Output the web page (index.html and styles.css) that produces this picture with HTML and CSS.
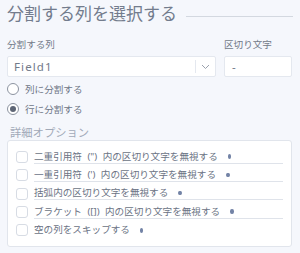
FILE: index.html
```html
<!DOCTYPE html>
<html lang="ja">
<head>
  <meta charset="UTF-8">
  <meta name="viewport" content="width=device-width, initial-scale=1.0">
  <title>分割する列を選択する</title>
  <link rel="stylesheet" href="styles.css">
</head>
<body>
  <div class="title-row">
    <h1>分割する列を選択する</h1>
    <div class="rule"></div>
  </div>

  <div class="fields">
    <div class="field field-main">
      <label class="field-label">分割する列</label>
      <div class="select">
        <span class="select-value">Field1</span>
        <span class="select-arrow">
          <svg width="9" height="6" viewBox="0 0 9 6"><path d="M1 1l3.5 3.5L8 1" fill="none" stroke="#9aa1ad" stroke-width="1"/></svg>
        </span>
      </div>
    </div>
    <div class="field field-sep">
      <label class="field-label">区切り文字</label>
      <div class="input">-</div>
    </div>
  </div>

  <div class="radios">
    <div class="radio-row"><span class="radio"></span>列に分割する</div>
    <div class="radio-row"><span class="radio checked"></span>行に分割する</div>
  </div>

  <div class="section-title">詳細オプション</div>
  <div class="options">
    <div class="option"><span class="checkbox"></span><span class="option-label">二重引用符 (&quot;) 内の区切り文字を無視する<i class="dot"></i></span></div>
    <div class="option"><span class="checkbox"></span><span class="option-label">一重引用符 (') 内の区切り文字を無視する<i class="dot"></i></span></div>
    <div class="option"><span class="checkbox"></span><span class="option-label">括弧内の区切り文字を無視する<i class="dot"></i></span></div>
    <div class="option"><span class="checkbox"></span><span class="option-label">ブラケット ([]) 内の区切り文字を無視する<i class="dot"></i></span></div>
    <div class="option"><span class="checkbox"></span><span class="option-label">空の列をスキップする<i class="dot"></i></span></div>
  </div>
</body>
</html>
```

FILE: styles.css
```css
body {
  margin: 0;
  padding: 2px 8px 0 7px;
  background: #f5f7fc;
  font-family: "Noto Sans", "Noto Sans CJK JP", sans-serif;
  color: #6e7686;
}

/* heading with a rule to the right */
.title-row {
  display: flex;
  align-items: center;
  gap: 9px;
  height: 24px;
}
.title-row h1 {
  margin: 0;
  font-size: 17px;
  font-weight: 400;
  line-height: 24px;
  color: #737c8d;
  white-space: nowrap;
}
.rule {
  flex: 1;
  border-top: 1px solid #d3d8e0;
  margin-top: 5px;
  margin-right: -1px;
}

.fields {
  display: flex;
  gap: 8px;
  margin-top: 12px;
}
.field-main {
  width: 209px;
}
.field-sep {
  flex: 1;
}
.field-label {
  display: block;
  font-size: 9.6px;
  line-height: 14px;
  margin-bottom: 4px;
  color: #727a89;
}
.select,
.input {
  box-sizing: border-box;
  height: 21px;
  background: #fff;
  border: 1px solid #e4e8ef;
  border-radius: 2px;
  font-size: 11.5px;
  letter-spacing: 1.1px;
  color: #727a8a;
}
.select {
  display: flex;
  align-items: center;
}
.select-value {
  flex: 1;
  padding-left: 6px;
}
.select-arrow {
  width: 19px;
  height: 13px;
  border-left: 1px solid #e4e8ef;
  display: flex;
  align-items: center;
  justify-content: center;
}
.input {
  display: flex;
  align-items: center;
  padding-left: 7px;
}

.radios {
  margin-top: 2px;
}
.radio-row {
  display: flex;
  align-items: center;
  gap: 6px;
  height: 20px;
  font-size: 9.6px;
  color: #6e7686;
}
.radio {
  box-sizing: border-box;
  width: 12px;
  height: 12px;
  border: 1px solid #8c93a0;
  border-radius: 50%;
  background: #fff;
  position: relative;
}
.radio.checked::after {
  content: "";
  position: absolute;
  left: 2px;
  top: 2px;
  width: 6px;
  height: 6px;
  border-radius: 50%;
  background: #5d6575;
}

.section-title {
  margin-top: 7px;
  padding-left: 3px;
  font-size: 11.3px;
  line-height: 14px;
  color: #a1a9b8;
}

.options {
  background: #fff;
  border: 1px solid #e1e5ec;
  border-radius: 3px;
  padding: 7px 8px 7px 8px;
}
.option {
  display: flex;
  align-items: center;
  gap: 6px;
  height: 18.3px;
}
.checkbox {
  box-sizing: border-box;
  width: 12px;
  height: 12px;
  border: 1px solid #d7dce4;
  border-radius: 3px;
  flex-shrink: 0;
}
.option-label {
  flex: 1;
  display: flex;
  align-items: center;
  font-size: 9.6px;
  line-height: 12px;
  word-spacing: 3px;
  color: #6b7384;
  border-bottom: 1px solid #dfe3ea;
}
.option:last-child .option-label {
  border-bottom: none;
}
.dot {
  display: inline-block;
  width: 3.5px;
  height: 4.5px;
  border-radius: 50%;
  background: #7383a6;
  margin-left: 10px;
}
```
